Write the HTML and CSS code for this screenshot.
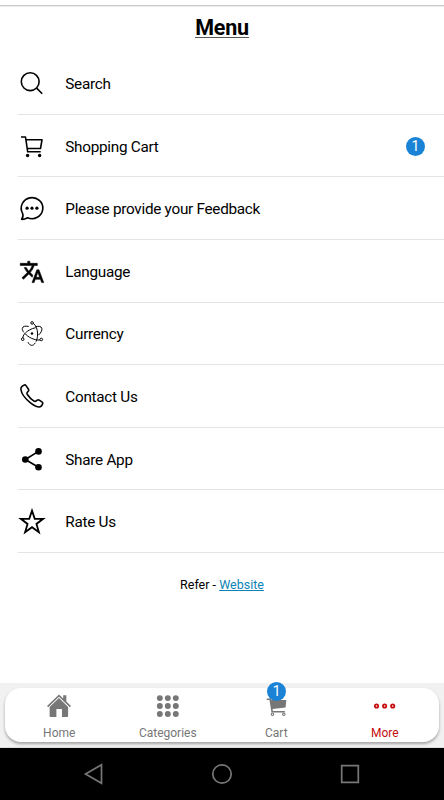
FILE: index.html
```html
<!DOCTYPE html>
<html lang="en">
<head>
<meta charset="utf-8">
<title>Menu</title>
<link rel="stylesheet" href="styles.css">
</head>
<body>
<main class="page">
  <h1 class="title"><span>Menu</span></h1>
  <ul class="menu">
    <li class="row"><svg class="icon" viewBox="0 0 28 28"><circle cx="12.2" cy="11.700" r="8.900"/><path d="M18.400 17.900l5.800 5.800"/></svg><span>Search</span></li>
    <li class="row"><svg class="icon" viewBox="0 0 28 28"><path d="M3 4h4.500l2.200 14.800h13M8 6.800h16l-1.500 8.700H9.300"/><circle class="solid" cx="9.600" cy="22.500" r="1.700"/><circle class="solid" cx="21.600" cy="22.500" r="1.700"/></svg><span>Shopping Cart</span><b class="badge">1</b></li>
    <li class="row"><svg class="icon" viewBox="0 0 28 28"><path d="M4.600 18.300A10.800 10.500 0 1 1 9.500 22.700C7.500 23.900 5.800 24.500 3.600 24.300C4.900 22.800 5.300 20.500 4.600 18.300z"/><circle class="solid" cx="9.100" cy="13.200" r="1.600"/><circle class="solid" cx="14" cy="13.200" r="1.600"/><circle class="solid" cx="18.900" cy="13.200" r="1.600"/></svg><span>Please provide your Feedback</span></li>
    <li class="row"><svg class="icon solid heavy" viewBox="-1.100 -1 26.200 26.200"><path d="M12.870 15.070l-2.540-2.510.03-.03c1.740-1.940 2.980-4.170 3.710-6.530H17V4h-7V2H8v2H1v1.990h11.170C11.500 7.920 10.440 9.750 9 11.350 8.070 10.320 7.300 9.190 6.690 8h-2c.73 1.630 1.730 3.170 2.980 4.560l-5.090 5.020L4 19l5-5 3.110 3.110.76-2.040zM18.500 10h-2L12 22h2l1.120-3h4.750L21 22h2l-4.500-12zm-2.620 7l1.620-4.330L19.120 17h-3.240z"/></svg><span>Language</span></li>
    <li class="row"><svg class="icon fine" viewBox="0 0 28 28"><path d="M15.400 3.500c2.700 1.800 4.200 6 4.200 10.500 0 3-.6 5.700-1.600 7.700M17.300 22.800c-1.900 3.500-5.400 3.500-7.400-.7M10.700 6.500C7.200 5.600 4.700 6.400 4.300 8.400c-.2 1.200.4 2.500 1.500 3.900M17.400 6.700c3.300-.9 5.800-.3 6.400 1.500.6 2-.9 4.700-3.400 7M4.900 18c-.2-2.600 2.600-5.800 6.300-7.900 2-1.200 4.300-2 6.500-2.400M7 13.600c3 3.500 9.400 6.900 15.100 6.400"/><circle cx="14.100" cy="2.900" r="1.300"/><circle cx="4.700" cy="19.200" r="1.300"/><circle cx="23.300" cy="19.500" r="1.300"/><circle class="solid" cx="14" cy="13.500" r="1.200"/></svg><span>Currency</span></li>
    <li class="row"><svg class="icon" viewBox="0 0 28 28"><path d="M4 3.400L6 2.100Q7.200 1.500 8 2.600L10.500 6.200Q11.200 7.300 10.300 8.200L9.300 9.300Q8.500 10.200 9.300 11.500Q12 15.500 16 18.100Q17.200 18.800 18 18L19.300 17.100Q20.200 16.500 21.300 17.200L24.200 19.200Q25.300 20.100 24.500 21.200L23.200 23.200C21.500 24.800 17 23.200 12.500 19.800C7.500 15.900 3.500 10.500 2.900 6.500Q2.700 4.600 4 3.400z"/></svg><span>Contact Us</span></li>
    <li class="row"><svg class="icon" viewBox="0 0 28 28"><path d="M20.500 5.400L7.300 13.500l13.200 7.800"/><circle class="solid" cx="20.500" cy="5.400" r="3.300"/><circle class="solid" cx="7.300" cy="13.500" r="3.300"/><circle class="solid" cx="20.500" cy="21.300" r="3.300"/></svg><span>Share App</span></li>
    <li class="row"><svg class="icon star" viewBox="0.800 1 26.400 26.400"><path d="M14 3.500l2.600 7.700h7.900l-6.300 4.800 2.300 7.800-6.500-4.700-6.500 4.700 2.300-7.800-6.300-4.800h7.900z"/></svg><span>Rate Us</span></li>
  </ul>
  <p class="refer">Refer - <a class="link">Website</a></p>
</main>
<footer class="dock">
  <nav class="tabs">
    <div class="tab"><svg class="tab-icon" viewBox="0 0 28 28"><path d="M14 1.500l4.500 4.300V2.400h3.400v6.700l5 4.900-1.200 1.300L14 4.100 2.300 15.300 1.100 14z"/><path d="M14 5.500l9.800 9.500v9.800q0 1-1 1h-5.600v-8.700h-6v8.700H4.900q-1 0-1-1V15z"/></svg><span>Home</span></div>
    <div class="tab"><svg class="tab-icon" viewBox="0 0 28 28"><circle cx="5.200" cy="5.500" r="3.200"/><circle cx="13.800" cy="5.500" r="3.200"/><circle cx="22.400" cy="5.500" r="3.200"/><circle cx="5.200" cy="14.100" r="3.200"/><circle cx="13.800" cy="14.100" r="3.200"/><circle cx="22.400" cy="14.100" r="3.200"/><circle cx="5.200" cy="22.700" r="3.200"/><circle cx="13.800" cy="22.700" r="3.200"/><circle cx="22.400" cy="22.700" r="3.200"/></svg><span>Categories</span></div>
    <div class="tab"><svg class="tab-icon" viewBox="0 0 28 28"><path d="M4 5.800h4.500l.6 1.700h16l-.8 8.200L10.300 17.300l.3 2h12.900v1.600H9.100L7 7.500H4z"/><circle class="ring" cx="10.200" cy="22.900" r="1.300"/><circle class="ring" cx="22.400" cy="22.900" r="1.300"/></svg><b class="badge tab-badge">1</b><span>Cart</span></div>
    <div class="tab active"><svg class="tab-icon" viewBox="0 0 28 28"><circle class="dot" cx="4.900" cy="14" r="1.800"/><circle class="dot" cx="13.600" cy="14" r="1.800"/><circle class="dot" cx="22.300" cy="14" r="1.800"/></svg><span>More</span></div>
  </nav>
</footer>
<div class="system">
  <svg class="sys-icon" viewBox="0 0 24 24"><path d="M19.500 2.700v18.600L3.500 12z"/></svg>
  <svg class="sys-icon" viewBox="0 0 24 24"><circle cx="12" cy="12" r="9.200"/></svg>
  <svg class="sys-icon" viewBox="0 0 24 24"><path d="M3.700 3.700h16.600v16.600H3.700z"/></svg>
</div>
</body>
</html>
```
FILE: styles.css
```css
* { box-sizing: border-box; }
body {
  margin: 0;
  height: 800px;
  display: flex;
  flex-direction: column;
  background: #fff;
  color: #000;
  font-family: Roboto, "Liberation Sans", sans-serif;
  overflow: hidden;
}
.page { flex: 1; margin-top: 5px; border-top: 1px solid #c9c9c9; box-shadow: inset 0 1px #ececec; }
.title { margin: 0; height: 46.200px; padding-top: 9px; text-align: center; font-size: 21.500px; line-height: 25px; font-weight: 700; letter-spacing: -.3px; }
.title span { display: inline-block; height: 23px; border-bottom: 1px solid #555; }
.menu { margin: 0; padding: 0 0 0 18px; list-style: none; }
.row {
  display: flex;
  align-items: center;
  height: 62.620px;
  padding: 2px 19px 0 0;
  border-bottom: 1px solid #e4e4e4;
  font-size: 15.300px;
  letter-spacing: -.28px;
}
.row span { flex: 1; }
.icon { width: 28px; height: 28px; margin-right: 19.300px; fill: none; stroke: #000; stroke-width: 1.600; stroke-linejoin: round; }
.icon .solid { fill: #000; stroke: none; }
.icon.solid { fill: #000; }
.icon.heavy { stroke-width: .5; }
.icon.fine { stroke-width: 1; }
.icon.star { stroke-width: 1.700; stroke-linejoin: miter; }
.badge {
  display: block;
  width: 19px;
  height: 19px;
  border-radius: 50%;
  background: #1a83d5;
  color: #fff;
  font-size: 14px;
  font-weight: 400;
  line-height: 19px;
  letter-spacing: 0;
  text-align: center;
}
.refer { margin: 24px 0 0; text-align: center; font-size: 12.500px; line-height: 16px; }
.link { color: #0b84b5; text-decoration: underline; }
.dock { height: 65px; padding: 5px 5px 0; background: #f1f1f1; border-bottom: 1px solid #ddd; }
.tabs { display: flex; height: 54px; border-radius: 16px; background: #fff; box-shadow: 0 2px 3px rgba(0, 0, 0, .32); }
.tab { position: relative; flex: 1; display: flex; flex-direction: column; align-items: center; padding-top: 5px; color: #777; font-size: 12px; line-height: 14px; }
.tab-icon { width: 26px; height: 26px; margin-bottom: 7px; fill: currentColor; }
.ring { fill: none; stroke: currentColor; stroke-width: 1.200; }
.dot { fill: #fff; stroke: currentColor; stroke-width: 1.900; }
.active { color: #c60c0c; }
.tab-badge { position: absolute; top: -6px; left: 50%; margin-left: -9px; }
.system { display: flex; justify-content: space-between; align-items: center; height: 52px; padding: 0 82px; background: #000; }
.sys-icon { width: 24px; height: 24px; fill: none; stroke: #777; stroke-width: 1.700; }
```
